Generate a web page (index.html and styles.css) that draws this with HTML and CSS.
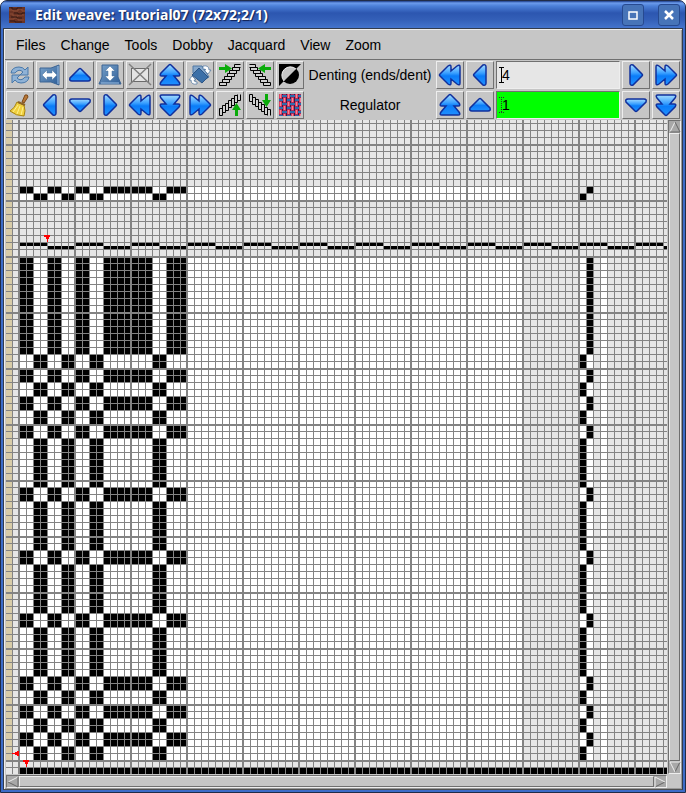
FILE: index.html
```html
<!DOCTYPE html>
<html lang="en">
<head>
<meta charset="UTF-8">
<meta name="viewport" content="width=device-width, initial-scale=1.0">
<title>Edit weave: Tutorial07 (72x72;2/1)</title>
<link rel="stylesheet" href="styles.css">
</head>
<body>
<!-- shared icon shapes -->
<svg class="defs" width="0" height="0" aria-hidden="true">
<defs>
<linearGradient id="blue" x1="0" y1="0" x2="0" y2="1">
<stop offset="0" stop-color="#a4dcff"/>
<stop offset="0.4" stop-color="#3ba0ff"/>
<stop offset="0.55" stop-color="#0a7cf8"/>
<stop offset="1" stop-color="#2090ff"/>
</linearGradient>
<linearGradient id="steel" x1="0" y1="0" x2="1" y2="1">
<stop offset="0" stop-color="#7ba4cc"/>
<stop offset="1" stop-color="#2c5c96"/>
</linearGradient>
<pattern id="cloth" x="1" y="1" width="8" height="8" patternUnits="userSpaceOnUse">
<rect width="8" height="8" fill="#3c1848"/>
<path d="M0 0h3v4h-3zM4 4h3v4h-3z" fill="#e0405c"/>
<path d="M3 1h5v2h-5zM0 5h4v2h-4z" fill="#2c6cae"/>
<path d="M4 0h3v1h-3zM4 3h3v1h-3zM0 4h3v1h-3zM0 7h3v1h-3z" fill="#a82c5c"/>
<path d="M1 0h1v4h-1zM5 4h1v4h-1z" fill="#f4849a"/>
</pattern>
<symbol id="up" viewBox="0 0 24 24"><path class="arrow" d="M11 6Q12 5 13 6L22 15Q23 18 20 18H4Q1 18 2 15Z"/></symbol>
<symbol id="down" viewBox="0 0 24 24"><path class="arrow" d="M11 18Q12 19 13 18L22 9Q23 6 20 6H4Q1 6 2 9Z"/></symbol>
<symbol id="left" viewBox="0 0 24 24"><path class="arrow" d="M6 11Q5 12 6 13L15 22Q18 23 18 20V4Q18 1 15 2Z"/></symbol>
<symbol id="right" viewBox="0 0 24 24"><path class="arrow" d="M18 11Q19 12 18 13L9 22Q6 23 6 20V4Q6 1 9 2Z"/></symbol>
<symbol id="first" viewBox="0 0 24 24"><path class="arrow" d="M2 11Q1 12 2 13L10 21Q13 23 13 20V16L19 21Q22 23 22 20V4Q22 1 19 3L13 8V4Q13 1 10 3Z"/></symbol>
<symbol id="last" viewBox="0 0 24 24"><path class="arrow" d="M22 11Q23 12 22 13L14 21Q11 23 11 20V16L5 21Q2 23 2 20V4Q2 1 5 3L11 8V4Q11 1 14 3Z"/></symbol>
<symbol id="top" viewBox="0 0 24 24"><path class="arrow" d="M11 2Q12 1 13 2L21 10Q23 13 20 13H16L21 19Q23 22 20 22H4Q1 22 3 19L8 13H4Q1 13 3 10Z"/></symbol>
<symbol id="bottom" viewBox="0 0 24 24"><path class="arrow" d="M11 22Q12 23 13 22L21 14Q23 11 20 11H16L21 5Q23 2 20 2H4Q1 2 3 5L8 11H4Q1 11 3 14Z"/></symbol>
<g id="steps">
<path d="M1.500 19.500h7v3h-7zM4.500 16.500h7v3h-7zM6.500 13.500h7v3h-7zM9.500 10.500h7v3h-7zM11.500 7.500h7v3h-7zM14.500 4.500h7v3h-7zM22.500 1.500h-6v3h6" fill="#d0d0d0" stroke="#000"/>
<path d="M1 4h6v-3l7 4.500l-7 4.500v-3h-6z" fill="#0aac0a"/>
</g>
</defs>
</svg>

<div class="window">
<header class="titlebar">
<svg class="app-icon" viewBox="0 0 16 16"><rect width="16" height="16" fill="#6b3324"/><path d="M0 3h4v1h5v-2h4v2h3M1 7h3v2h5v-1h6M0 12h5v-1h4v2h6" fill="none" stroke="#8c4c34"/><path d="M0 0h3v2h5v-1h5M5 6h4v1h4v-1h3M2 10h6v1h5M1 14h5v1h7" fill="none" stroke="#331812"/></svg>
<h1>Edit weave: Tutorial07 (72x72;2/1)</h1>
<button class="win-btn" aria-label="Maximize"><svg viewBox="0 0 20 20"><path d="M6 7h8v7h-8z" fill="none" stroke="#fff" stroke-width="1.500"/></svg></button>
<button class="win-btn" aria-label="Close"><svg viewBox="0 0 20 20"><path d="M6 6l8 8M14 6l-8 8" stroke="#fff" stroke-width="2.500"/></svg></button>
</header>

<main class="client">
<nav class="menubar">
<button>Files</button>
<button>Change</button>
<button>Tools</button>
<button>Dobby</button>
<button>Jacquard</button>
<button>View</button>
<button>Zoom</button>
</nav>

<div class="toolbar">
<button class="tool" aria-label="Refresh"><svg viewBox="0 0 24 24"><path d="M3 10q1-6 8-6q4 0 6 3l3-3v8h-8l3-3q-4-4-8 1zM21 14q-1 6-8 6q-4 0-6-3l-3 3v-8h8l-3 3q4 4 8-1z" fill="#8fb2d6" stroke="#4878aa"/></svg></button>
<button class="tool" aria-label="Flip horizontally"><svg viewBox="0 0 24 24"><path d="M2 5h11l8-3v20l-8-3h-11z" fill="url(#steel)" stroke="#3c6494"/><path d="M20 3v18" stroke="#9cc0e4"/><path d="M4 12l5-5v3h5v-3l5 5l-5 5v-3h-5v3z" fill="#fff" stroke="#48709c" stroke-width=".5"/></svg></button>
<button class="tool" aria-label="Shift up"><svg><use href="#up"/></svg></button>
<button class="tool" aria-label="Flip vertically"><svg viewBox="0 0 24 24"><path d="M4 2h16v12l3 7h-22l3-7z" fill="url(#steel)" stroke="#3c6494"/><path d="M3 20h18" stroke="#9cc0e4"/><path d="M12 3l5 5h-3v5h3l-5 5l-5-5h3v-5h-3z" fill="#fff" stroke="#48709c" stroke-width=".5"/></svg></button>
<button class="tool" aria-label="Clear selection"><svg viewBox="0 0 24 24"><path d="M3.500 5.500h17v13h-17z" fill="#e4e4e4" stroke="#000" stroke-dasharray="1 1"/><path d="M1 1l22 21M23 1l-22 21" stroke="#808080" stroke-width="1.500"/></svg></button>
<button class="tool" aria-label="Shift to top"><svg><use href="#top"/></svg></button>
<button class="tool" aria-label="Rotate"><svg viewBox="0 0 24 24"><path d="M5 3h9l7 11l-6 4l-10-8z" fill="#86a8cc" stroke="#5078a4"/><path d="M4 12l7-7l9 9l-6 6z" fill="#3c70a8" stroke="#2c5484"/><path d="M15 3q6-1 6 4h2l-3 4l-4-4h2q0-1-3-1zM9 21q-6 1-6-4h-2l3-4l4 4h-2q0 2 3 2z" fill="#fff" stroke="#48709c" stroke-width=".7"/></svg></button>
<button class="tool" aria-label="Draft from left"><svg viewBox="0 0 24 24"><use href="#steps"/></svg></button>
<button class="tool" aria-label="Draft from right"><svg viewBox="0 0 24 24"><use href="#steps" transform="matrix(-1 0 0 1 24 0)"/></svg></button>
<button class="tool" aria-label="Invert"><svg viewBox="0 0 24 24"><path d="M1 1h22l-22 22z"/><circle cx="12" cy="12" r="9"/><path d="M18 6a8.500 8.500 0 0 0-12 12z" fill="#c6c6c6"/><path d="M18 6a8.500 8.500 0 0 0-12 12" fill="none" stroke="#eee"/></svg></button>
<label class="caption" for="denting">Denting (ends/dent)</label>
<button class="tool" aria-label="Denting minus ten"><svg><use href="#first"/></svg></button>
<button class="tool" aria-label="Denting minus one"><svg><use href="#left"/></svg></button>
<div class="field">
<input type="text" id="denting" value="4">
<svg class="caret" viewBox="0 0 5 16"><path d="M0 .5h5M0 15.500h5M2.500 0v16" stroke="#000"/></svg>
</div>
<button class="tool" aria-label="Denting plus one"><svg><use href="#right"/></svg></button>
<button class="tool" aria-label="Denting plus ten"><svg><use href="#last"/></svg></button>
</div>

<div class="toolbar">
<button class="tool" aria-label="Clear"><svg viewBox="0 0 24 24"><path d="M14 9l3-7q3-1 3 2l-4 6z" fill="#b87838" stroke="#7c4818"/><path d="M9 9l7 3q2 6 0 11q-8 0-14-5q5-3 7-9z" fill="#f0d040" stroke="#a88410"/><path d="M10 12l-5 7M12 13l-3 8M15 14l-2 8" stroke="#fff08c"/><path d="M10 9l7 3" stroke="#8c6428" stroke-width="2"/></svg></button>
<button class="tool" aria-label="Shift left"><svg><use href="#left"/></svg></button>
<button class="tool" aria-label="Shift down"><svg><use href="#down"/></svg></button>
<button class="tool" aria-label="Shift right"><svg><use href="#right"/></svg></button>
<button class="tool" aria-label="Shift far left"><svg><use href="#first"/></svg></button>
<button class="tool" aria-label="Shift to bottom"><svg><use href="#bottom"/></svg></button>
<button class="tool" aria-label="Shift far right"><svg><use href="#last"/></svg></button>
<button class="tool" aria-label="Draft from bottom"><svg viewBox="0 0 24 24"><use href="#steps" transform="matrix(0 -1 -1 0 24 24)"/></svg></button>
<button class="tool" aria-label="Draft from top"><svg viewBox="0 0 24 24"><use href="#steps" transform="matrix(0 1 -1 0 24 0)"/></svg></button>
<button class="tool" aria-label="Show fabric"><svg viewBox="0 0 24 24"><rect x="1" y="1" width="22" height="22" fill="url(#cloth)"/></svg></button>
<label class="caption" for="regulator">Regulator</label>
<button class="tool" aria-label="Regulator plus ten"><svg><use href="#top"/></svg></button>
<button class="tool" aria-label="Regulator plus one"><svg><use href="#up"/></svg></button>
<div class="field">
<input type="text" id="regulator" class="on" value="1">
<svg class="caret" viewBox="0 0 5 16"><path d="M0 .5h5M0 15.500h5M2.500 0v16" stroke="#333" stroke-dasharray="1 1"/></svg>
</div>
<button class="tool" aria-label="Regulator minus one"><svg><use href="#down"/></svg></button>
<button class="tool" aria-label="Regulator minus ten"><svg><use href="#bottom"/></svg></button>
</div>

<div class="workspace">
<svg class="draft" id="draft" role="img" aria-label="Weave draft">
<defs>
<pattern id="thin" x="6" y="3" width="7" height="7" patternUnits="userSpaceOnUse"><path d="M0 0h7v1h-6v6h-1z" fill="#838383"/></pattern>
<pattern id="thick" x="12" y="24" width="56" height="56" patternUnits="userSpaceOnUse"><path d="M0 0h56v2h-54v54h-2z" fill="#838383"/></pattern>
</defs>
<rect width="100%" height="100%" fill="#e6e6e6"/>
<rect width="6" height="640" fill="#d8cca8"/>
<g id="cells"></g>
<rect width="100%" height="100%" fill="url(#thin)"/>
<rect width="100%" height="100%" fill="url(#thick)"/>
<path d="M38 115h6v2h-1v2h-1v3h-1v-3h-1v-2h-2zM17 640h6v2h-1v2h-1v3h-1v-3h-1v-2h-2zM6 633h3v-1h2v-1h2v5h-2v-1h-2v-1h-3z" fill="#f00"/>
</svg>
<div class="scroll vertical">
<button aria-label="Scroll up"><svg viewBox="0 0 12 12"><path d="M1 11L6 1" stroke="#eee"/><path d="M6 1L11 11H1" fill="none" stroke="#666"/></svg></button>
<div class="thumb"></div>
<button aria-label="Scroll down"><svg viewBox="0 0 12 12"><path d="M11 1L6 11" stroke="#666"/><path d="M6 11L1 1H11" fill="none" stroke="#eee"/></svg></button>
</div>
<div class="scroll horizontal">
<button aria-label="Scroll left"><svg viewBox="0 0 12 12"><path d="M11 1L1 6" stroke="#eee"/><path d="M1 6L11 11V1" fill="none" stroke="#666"/></svg></button>
<div class="thumb"></div>
<button aria-label="Scroll right"><svg viewBox="0 0 12 12"><path d="M1 11L11 6" stroke="#666"/><path d="M11 6L1 1V11" fill="none" stroke="#eee"/></svg></button>
</div>
</div>
</main>
</div>
<script src="draft.js"></script>
</body>
</html>
```
FILE: styles.css
```css
* {
box-sizing: border-box;
}

body {
margin: 0;
background: #fff;
font-family: "Liberation Sans", Arial, sans-serif;
font-size: 14px;
color: #000;
}

button {
padding: 0;
font: inherit;
color: inherit;
}

.defs {
position: absolute;
}

.window {
display: flex;
flex-direction: column;
height: 100vh;
border: 1px solid #202c48;
border-radius: 7px 7px 0 0;
padding: 0 2px 2px;
background: #3c6cc8;
overflow: hidden;
}

/* title bar */
.titlebar {
display: flex;
align-items: center;
gap: 14px;
flex: none;
height: 27px;
margin: 0 -2px;
padding: 0 5px 0 8px;
background: linear-gradient(#1c3c88 0, #6c9cec 2px, #4c80d8 5px, #2c56b0 12px, #3460b8 19px, #4474cc 27px);
}
.titlebar h1 {
flex: 1;
margin: 0 0 0 -4px;
font-family: "Noto Sans", "Open Sans", sans-serif;
font-size: 14px;
line-height: 20px;
color: #fff;
text-shadow: 1px 1px 1px #102050;
white-space: nowrap;
}
.app-icon {
width: 16px;
height: 16px;
}
.win-btn {
width: 22px;
height: 22px;
border: 1px solid #274a90;
border-radius: 3px;
background: #4774b8;
}
.win-btn svg {
display: block;
width: 20px;
height: 20px;
}

.client {
display: flex;
flex-direction: column;
flex: 1;
min-height: 0;
border: 1px solid #333c4c;
border-bottom-color: #505050;
background: #c6c6c6;
box-shadow: inset 1px 1px #eee, inset -1px -1px #999;
padding: 1px;
}

/* menus */
.menubar {
display: flex;
flex: none;
gap: 15px;
height: 30px;
padding: 0 11px;
border-bottom: 1px solid #707070;
}
.menubar button {
border: 0;
background: none;
}

/* tool rows */
.toolbar {
display: flex;
flex: none;
gap: 2px;
height: 30px;
padding: 1px;
}
.tool {
flex: none;
width: 28px;
height: 28px;
border: 1px solid;
border-color: #eee #707070 #707070 #eee;
background: #c6c6c6;
padding: 1px;
}
.tool svg {
display: block;
width: 24px;
height: 24px;
}
.arrow {
fill: url(#blue);
stroke: #10309c;
stroke-width: 1.5;
}
.caption {
flex: none;
width: 128px;
line-height: 28px;
text-align: center;
white-space: nowrap;
}
.field {
position: relative;
flex: 1;
min-width: 30px;
}
.field input {
display: block;
width: 100%;
height: 28px;
border: 1px solid;
border-color: #707070 #eee #eee #707070;
border-radius: 0;
background: #e6e6e6;
padding: 0 5px;
font: inherit;
}
.field .on {
background: #0f0;
}
.caret {
position: absolute;
left: 3px;
top: 6px;
width: 5px;
height: 16px;
}

/* draft and scroll bars */
.workspace {
display: grid;
grid-template-columns: 1fr 14px;
grid-template-rows: 1fr 14px;
flex: 1;
min-height: 0;
padding-left: 1px;
}
.draft {
display: block;
width: 100%;
height: 100%;
min-height: 0;
shape-rendering: crispEdges;
}
.scroll {
display: flex;
border: 1px solid;
border-color: #707070 #eee #eee #707070;
background: #a8a8a8;
}
.vertical {
flex-direction: column;
margin-left: 1px;
}
.horizontal {
margin-top: 1px;
}
.scroll button {
width: 12px;
height: 12px;
border: 0;
background: none;
}
.scroll svg {
display: block;
width: 100%;
height: 100%;
}
.thumb {
flex: 1;
border: 1px solid;
border-color: #eee #707070 #707070 #eee;
background: #c6c6c6;
}
```
FILE: draft.js
```js
const CELL = 7;
const LEFT = 13;
const WEAVE_TOP = 136;
const THREAD_TOP = 66;
const ENDS = 72;
const TREADLE = 80;

// ends on shaft 2 and on shaft 1: [first, count]
const shaft2 = [[0, 2], [4, 2], [8, 2], [12, 7], [21, 3]];
const shaft1 = [[2, 2], [6, 2], [10, 2], [19, 2]];

// picks from the top down, alternating between treadle 2 and treadle 1
const picks = [14, 2, 2, 2, 2, 2, 2, 7, 2, 7, 2, 7, 2, 7, 2, 2, 2, 2, 2, 2];

const cells = document.getElementById('cells');

function block(x, y, width, height, fill) {
const rect = document.createElementNS('http://www.w3.org/2000/svg', 'rect');
rect.setAttribute('x', x);
rect.setAttribute('y', y);
rect.setAttribute('width', width);
rect.setAttribute('height', height);
rect.setAttribute('fill', fill);
cells.appendChild(rect);
}

function cellBlock(col, y, cols, rows, fill) {
block(LEFT + col * CELL, y, cols * CELL, rows * CELL, fill);
}

// threading
cellBlock(0, THREAD_TOP, ENDS, 2, '#fff');
shaft2.forEach(([col, n]) => cellBlock(col, THREAD_TOP, n, 1, '#000'));
shaft1.forEach(([col, n]) => cellBlock(col, THREAD_TOP + CELL, n, 1, '#000'));

// tie-up
cellBlock(TREADLE + 1, THREAD_TOP, 1, 1, '#000');
cellBlock(TREADLE, THREAD_TOP + CELL, 1, 1, '#000');

// reed
for (let col = 0; col < 400; col++) {
const low = Math.floor(col / 4) % 2;
block(LEFT + col * CELL, low ? 126 : 123, CELL, 3, '#000');
}

// cloth and treadling
cellBlock(0, WEAVE_TOP, ENDS, 72, '#fff');
cellBlock(TREADLE, WEAVE_TOP, 2, 72, '#fff');
cellBlock(TREADLE + 3, WEAVE_TOP, 1, 72, '#fff');
let y = WEAVE_TOP;
picks.forEach((rows, i) => {
const ends = i % 2 ? shaft1 : shaft2;
ends.forEach(([col, n]) => cellBlock(col, y, n, rows, '#000'));
cellBlock(i % 2 ? TREADLE : TREADLE + 1, y, 1, rows, '#000');
y += rows * CELL;
});

// warp colours
cellBlock(0, y + CELL, 400, 1, '#000');
```
